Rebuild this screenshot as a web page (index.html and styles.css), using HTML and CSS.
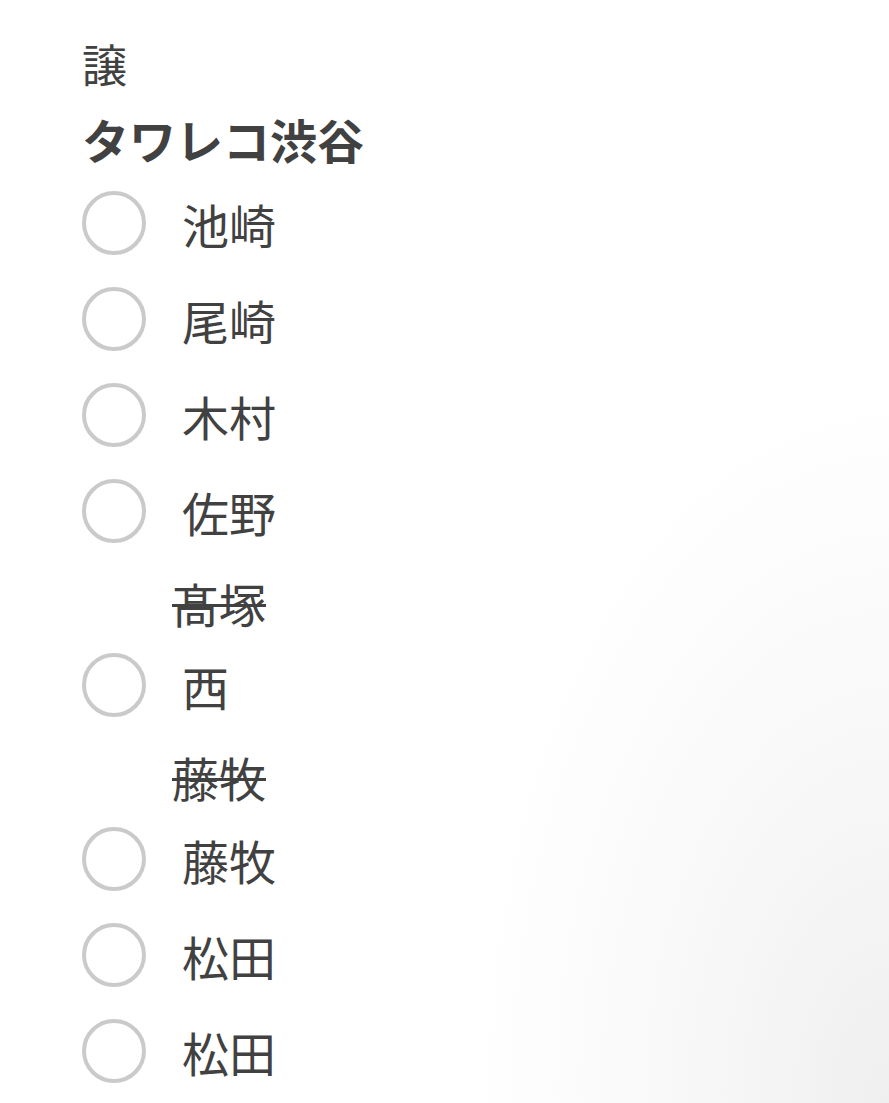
FILE: index.html
```html
<!DOCTYPE html>
<html lang="ja">

<head>
        <meta charset="UTF-8">
        <meta name="viewport" content="width=device-width, initial-scale=1.0">
        <title>譲 タワレコ渋谷</title>
        <link rel="stylesheet" href="styles.css">
</head>

<body>
        <div class="sheet">
                <p class="status">譲</p>
                <h2 class="venue">タワレコ渋谷</h2>

                <ul class="options">
                        <li class="option"><span class="radio"></span><span class="name">池崎</span></li>
                        <li class="option"><span class="radio"></span><span class="name">尾崎</span></li>
                        <li class="option"><span class="radio"></span><span class="name">木村</span></li>
                        <li class="option"><span class="radio"></span><span class="name">佐野</span></li>
                        <li class="taken"><span class="struck">髙塚</span></li>
                        <li class="option"><span class="radio"></span><span class="name">西</span></li>
                        <li class="taken"><span class="struck">藤牧</span></li>
                        <li class="option"><span class="radio"></span><span class="name">藤牧</span></li>
                        <li class="option"><span class="radio"></span><span class="name">松田</span></li>
                        <li class="option"><span class="radio"></span><span class="name">松田</span></li>
                </ul>
        </div>
</body>

</html>
```

FILE: styles.css
```css
html,
body {
        height: 100%;
}

body {
        margin: 0;
        font-family: "Noto Sans CJK JP", "Noto Sans", sans-serif;
        color: #414141;
        background: radial-gradient(ellipse 420px 720px at 100% 100%, #efefef 0%, #f8f8f8 50%, #fff 100%);
        overflow: hidden;
}

.sheet {
        padding: 36px 0 0 82px;
}

.status {
        margin: 0;
        font-size: 45px;
        line-height: 56px;
}

.venue {
        margin: 17px 0 6px;
        font-size: 47px;
        font-weight: bold;
        line-height: 60px;
}

.options {
        list-style: none;
        margin: 0;
        padding: 0;
}

.option {
        display: flex;
        align-items: center;
        height: 96px;
}

.radio {
        width: 56px;
        height: 56px;
        border: 4px solid #cacaca;
        border-radius: 50%;
        background-color: #fff;
        flex-shrink: 0;
}

.name {
        margin-left: 36px;
        font-size: 47px;
        line-height: 1;
}

.taken {
        height: 68px;
        padding: 10px 0 0 90px;
        font-size: 47px;
        line-height: 68px;
}

.struck {
        position: relative;
}

/* the line-through of the CJK face sits too high, draw it by hand */
.struck::after {
        content: "";
        position: absolute;
        left: 0;
        right: 0;
        top: 36px;
        height: 3px;
        background-color: #414141;
}
```
